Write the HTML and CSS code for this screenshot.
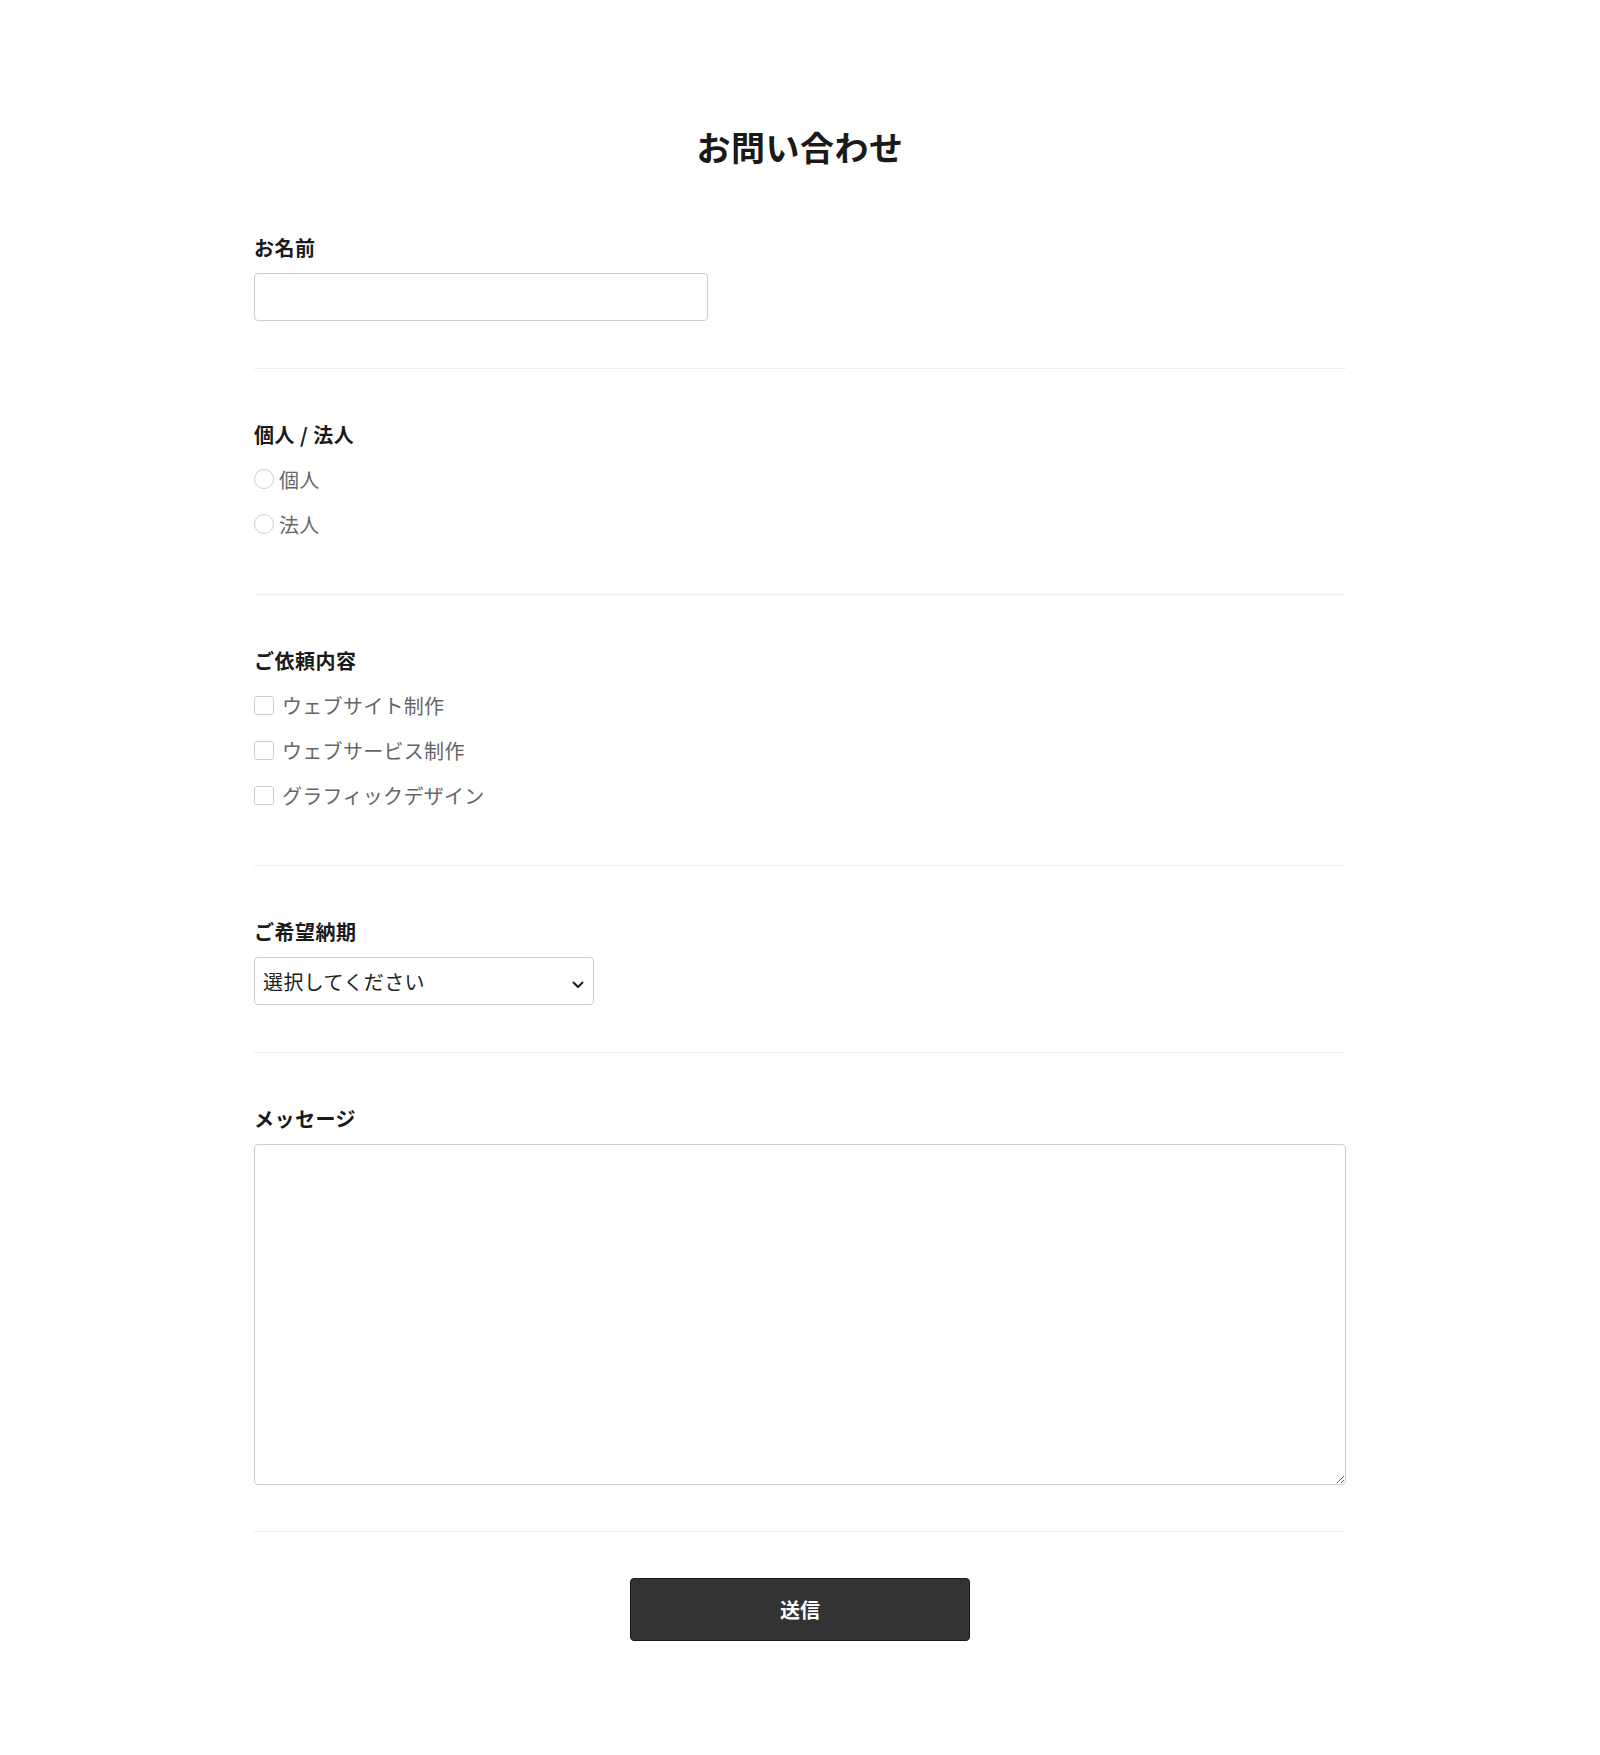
FILE: index.html
```html
<!DOCTYPE html>
<html lang="ja">
<head>
  <meta charset="UTF-8" />
  <meta name="viewport" content="width=device-width, initial-scale=1" />
  <title>お問い合わせ</title>
  <link rel="stylesheet" href="styles.css">
</head>
<body>
  <main class="contact">
    <h1 class="contact-title">お問い合わせ</h1>

    <form class="contact-form" action="#" method="post">
      <!-- Name -->
      <div class="field">
        <label class="field-label" for="name">お名前</label>
        <input type="text" id="name" name="name" class="text-input" />
      </div>

      <!-- Individual / corporate -->
      <div class="field">
        <p class="field-label">個人 / 法人</p>
        <div class="options">
          <label class="option">
            <input type="radio" name="type" value="individual" class="radio" />
            <span>個人</span>
          </label>
          <label class="option">
            <input type="radio" name="type" value="corporate" class="radio" />
            <span>法人</span>
          </label>
        </div>
      </div>

      <!-- Request -->
      <div class="field">
        <p class="field-label">ご依頼内容</p>
        <div class="options">
          <label class="option option-check">
            <input type="checkbox" name="request" value="website" class="check" />
            <span>ウェブサイト制作</span>
          </label>
          <label class="option option-check">
            <input type="checkbox" name="request" value="service" class="check" />
            <span>ウェブサービス制作</span>
          </label>
          <label class="option option-check">
            <input type="checkbox" name="request" value="graphic" class="check" />
            <span>グラフィックデザイン</span>
          </label>
        </div>
      </div>

      <!-- Deadline -->
      <div class="field">
        <label class="field-label" for="deadline">ご希望納期</label>
        <div class="select-wrap">
          <select id="deadline" name="deadline" class="select">
            <option value="">選択してください</option>
            <option value="1m">1ヶ月以内</option>
            <option value="3m">3ヶ月以内</option>
            <option value="6m">半年以内</option>
          </select>
          <svg class="select-arrow" width="12" height="8" viewBox="0 0 12 8" aria-hidden="true">
            <path d="M1.5 1.5 L6 6 L10.5 1.5" fill="none" stroke="#222" stroke-width="2" stroke-linecap="round" stroke-linejoin="round" />
          </svg>
        </div>
      </div>

      <!-- Message -->
      <div class="field field-last">
        <label class="field-label" for="message">メッセージ</label>
        <textarea id="message" name="message" class="textarea"></textarea>
      </div>

      <div class="form-actions">
        <button type="submit" class="submit-btn">送信</button>
      </div>
    </form>
  </main>
</body>
</html>
```

FILE: styles.css
```css
/* Base reset */
* {
  margin: 0;
  padding: 0;
  box-sizing: border-box;
}
body {
  background: #fff;
  color: #222;
  font-family: "Noto Sans CJK JP", "Noto Sans", sans-serif;
}
.contact {
  width: 1092px;
  margin: 0 auto;
  padding: 123px 0 113px;
}
.contact-title {
  font-size: 34px;
  line-height: 48px;
  font-weight: 700;
  letter-spacing: 0.5px;
  color: #1a1a1a;
  text-align: center;
  margin-bottom: 11px;
}
.field {
  padding: 53px 0 47px;
  border-bottom: 1px solid #eee;
}
.field-last {
  padding-bottom: 46px;
}
.field-label {
  display: block;
  font-size: 20px;
  line-height: 26px;
  font-weight: 700;
  letter-spacing: 0.5px;
  color: #1a1a1a;
  margin-bottom: 12px;
}
.text-input {
  display: block;
  width: 454px;
  height: 48px;
  border: 1px solid #ccc;
  border-radius: 4px;
  padding: 0 10px;
  font: inherit;
  font-size: 20px;
}
.options {
  display: flex;
  flex-direction: column;
  gap: 7px;
  padding-bottom: 4px;
}
.option {
  display: flex;
  align-items: center;
  gap: 5px;
  height: 38px;
  font-size: 20px;
  letter-spacing: 0.3px;
  color: #666;
}
.option-check {
  gap: 8px;
}
.radio,
.check {
  appearance: none;
  -webkit-appearance: none;
  width: 20px;
  height: 20px;
  margin: 0;
  border: 1px solid #ccc;
  background: #fff;
  flex-shrink: 0;
}
.radio {
  border-radius: 50%;
}
.check {
  border-radius: 3px;
  height: 19px;
}
.select-wrap {
  position: relative;
  width: 340px;
}
.select {
  appearance: none;
  -webkit-appearance: none;
  display: block;
  width: 100%;
  height: 48px;
  border: 1px solid #ccc;
  border-radius: 4px;
  background: #fff;
  padding: 0 36px 0 8px;
  font: inherit;
  font-size: 20px;
  letter-spacing: 0.4px;
  color: #222;
}
.select-arrow {
  position: absolute;
  right: 10px;
  top: 24px;
  pointer-events: none;
}
.textarea {
  display: block;
  width: 100%;
  height: 341px;
  border: 1px solid #ccc;
  border-radius: 4px;
  padding: 10px;
  font: inherit;
  font-size: 20px;
  resize: vertical;
}
.form-actions {
  display: flex;
  justify-content: center;
  padding-top: 46px;
}
.submit-btn {
  width: 340px;
  height: 63px;
  background: #333;
  border: 1px solid #1a1a1a;
  border-radius: 4px;
  color: #fff;
  font: inherit;
  font-size: 20px;
  font-weight: 700;
  cursor: pointer;
}
```
